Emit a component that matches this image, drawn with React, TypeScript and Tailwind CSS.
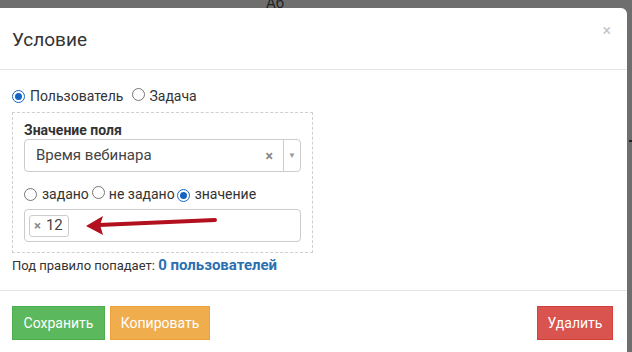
import React from "react";

function Radio({ checked }: { checked?: boolean }) {
  return checked ? (
    <span className="inline-flex w-[13px] h-[13px] rounded-full border-[1.5px] border-[#1565c0] items-center justify-center shrink-0">
      <span className="w-[7px] h-[7px] rounded-full bg-[#1565c0]" />
    </span>
  ) : (
    <span className="inline-block w-[13px] h-[13px] rounded-full border border-[#767676] shrink-0" />
  );
}

export default function App() {
  return (
    <div
      className="w-[632px] h-[352px] bg-[#6e6e6e] overflow-hidden relative"
      style={{ fontFamily: "Roboto, 'Liberation Sans', sans-serif" }}
    >
      <div className="absolute left-[266px] top-[-8px] text-[15px] text-[#222]">Аб</div>
      <div className="absolute right-0 top-[140px] w-[3px] h-[2px] bg-[#222]" />
      <div className="pt-[8px] pr-[5px] h-full">
        <div className="bg-white rounded-tr-[6px] h-full flex flex-col text-[#333]">
          <div className="h-[62px] border-b border-[#e5e5e5] flex items-center justify-between pl-[12px] pr-[16px]">
            <div className="text-[19px] leading-none mt-[1px]">Условие</div>
            <div className="text-[#c3c3c3] text-[16px] leading-none -mt-[16px]">×</div>
          </div>
          <div className="pl-[12px] pt-[16px] pb-[15px]">
            <div className="flex items-center h-[20px] text-[14px]">
              <Radio checked />
              <span className="ml-[5px]">Пользователь</span>
              <span className="ml-[9px]"><Radio /></span>
              <span className="ml-[4px]">Задача</span>
            </div>
            <div className="mt-[6px] w-[301px] border border-dashed border-[#cfcfcf] px-[11px] pt-[9px] pb-[10px]">
              <div className="text-[14px] font-bold leading-[17px]">Значение поля</div>
              <div className="h-[33px] border border-[#cccccc] rounded-[4px] flex items-center">
                <span className="flex-1 pl-[11px] text-[15px] text-[#444]">Время вебинара</span>
                <span className="text-[#888] text-[14px] font-bold mr-[10px] leading-none">×</span>
                <span className="h-full border-l border-[#cccccc] w-[17px] flex items-center justify-center text-[#999] text-[8px]">▼</span>
              </div>
              <div className="flex items-center h-[20px] text-[14px] mt-[12px]">
                <Radio />
                <span className="ml-[5px]">задано</span>
                <span className="ml-[3px]"><Radio /></span>
                <span className="ml-[4px]">не задано</span>
                <span className="ml-[2px]"><Radio checked /></span>
                <span className="ml-[5px]">значение</span>
              </div>
              <div className="relative mt-[5px] h-[33px] border border-[#cccccc] rounded-[4px] flex items-center pl-[4px]">
                <span className="h-[22px] w-[40px] border border-[#cccccc] rounded-[3px] flex items-center pl-[4px] text-[15px] text-[#444]">
                  <span className="text-[#888] text-[13px] font-bold mr-[5px]">×</span>12
                </span>
                <svg className="absolute left-[60px] top-[3px]" width="134" height="26" viewBox="0 0 134 26">
                  <path d="M14 12 L130 7" stroke="#b2101e" strokeWidth="4" strokeLinecap="round" fill="none" />
                  <path d="M1 13 L18 3 L15 12 L18 22 Z" fill="#b2101e" />
                </svg>
              </div>
            </div>
            <div className="mt-[3px] text-[13px] leading-[18px]">
              Под правило попадает: <span className="font-bold text-[15px] text-[#2a6fb0]">0 пользователей</span>
            </div>
          </div>
          <div className="border-t border-[#e5e5e5] pt-[15px] pl-[12px] pr-[14px] flex items-start">
            <button className="h-[34px] w-[93px] bg-[#5cb85c] border border-[#4cae4c] text-white text-[14px]">Сохранить</button>
            <button className="ml-[5px] h-[34px] w-[100px] bg-[#f0ad4e] border border-[#eea236] text-white text-[14px]">Копировать</button>
            <div className="flex-1" />
            <button className="h-[34px] w-[76px] bg-[#d9534f] border border-[#d43f3a] text-white text-[14px]">Удалить</button>
          </div>
        </div>
      </div>
    </div>
  );
}
